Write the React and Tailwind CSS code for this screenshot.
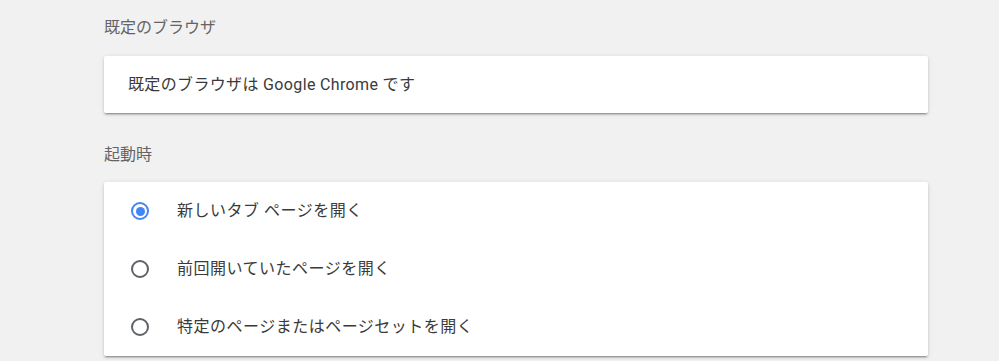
import { useState } from "react";

const font = { fontFamily: '"Roboto", "Noto Sans CJK JP", sans-serif' };

function Radio({ checked }) {
  return (
    <span
      className={
        "flex items-center justify-center w-[18px] h-[18px] rounded-full border-2 " +
        (checked ? "border-[#4285f4]" : "border-[#5f6368]")
      }
    >
      {checked && <span className="w-[9px] h-[9px] rounded-full bg-[#4285f4]" />}
    </span>
  );
}

const cardShadow =
  "bg-white rounded-[2px] shadow-[0_2px_2px_0_rgba(0,0,0,0.14),0_1px_5px_0_rgba(0,0,0,0.12),0_3px_1px_-2px_rgba(0,0,0,0.2)]";

export default function App() {
  const [startup, setStartup] = useState(0);
  const options = [
    "新しいタブ ページを開く",
    "前回開いていたページを開く",
    "特定のページまたはページセットを開く",
  ];

  return (
    <div className="w-full h-[361px] bg-[#f1f1f1] overflow-hidden" style={font}>
      <div className="ml-[104px] w-[824px] pt-[18px]">
        {/* default browser */}
        <h2 className="h-5 leading-5 text-[16px] text-[#646464] font-normal">既定のブラウザ</h2>
        <div className={"mt-[18px] h-[57px] flex items-center pl-6 " + cardShadow}>
          <span className="text-[16px] tracking-[0.35px] text-[#3a3a3a]">
            既定のブラウザは Google Chrome です
          </span>
        </div>

        {/* on startup */}
        <h2 className="mt-8 h-5 leading-5 text-[16px] text-[#646464] font-normal">起動時</h2>
        <div className={"mt-[17px] " + cardShadow}>
          {options.map((label, i) => (
            <div
              key={label}
              onClick={() => setStartup(i)}
              className="h-[58px] flex items-center pl-[27px] gap-7 cursor-pointer"
            >
              <Radio checked={startup === i} />
              <span className="text-[16px] tracking-[0.5px] text-[#3a3a3a]">{label}</span>
            </div>
          ))}
        </div>
      </div>
    </div>
  );
}
